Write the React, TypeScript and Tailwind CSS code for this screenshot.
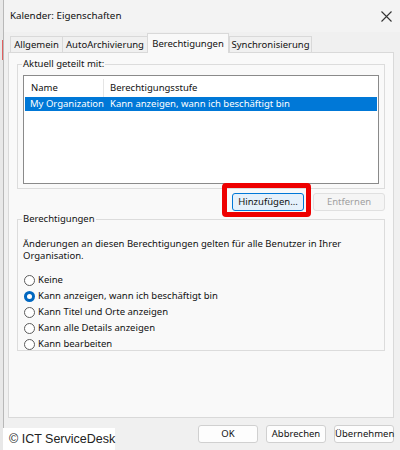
const font = { fontFamily: '"Segoe UI", "Noto Sans", "DejaVu Sans", sans-serif' };

const radios = [
  { label: 'Keine', checked: false },
  { label: 'Kann anzeigen, wann ich beschäftigt bin', checked: true },
  { label: 'Kann Titel und Orte anzeigen', checked: false },
  { label: 'Kann alle Details anzeigen', checked: false },
  { label: 'Kann bearbeiten', checked: false },
];

const tabs = [
  { label: 'Allgemein', w: 'w-[52px]' },
  { label: 'AutoArchivierung', w: 'w-[85px]' },
  { label: 'Berechtigungen', w: 'w-[82px]', active: true },
  { label: 'Synchronisierung', w: 'w-[83px]' },
];

function Radio({ checked }: { checked: boolean }) {
  return checked ? (
    <span className="w-[11px] h-[11px] rounded-full bg-[#0067c0] flex items-center justify-center shrink-0">
      <span className="w-[5px] h-[5px] rounded-full bg-white" />
    </span>
  ) : (
    <span className="w-[11px] h-[11px] rounded-full border border-[#5c5c5c] bg-white shrink-0" />
  );
}

export default function App() {
  return (
    <div
      className="w-[400px] h-[450px] relative overflow-hidden bg-[#d9d9d9] flex text-[9.5px] text-[#111] leading-none"
      style={font}
    >
      {/* window behind the dialog */}
      <div className="w-[3px] flex flex-col bg-[#e8e8e8]">
        <div className="h-[40px]" />
        <div className="h-[20px] border-r border-[#e06060]" />
      </div>

      {/* dialog */}
      <div className="flex-1 flex flex-col bg-[#f0f0f0] border-l border-[#b8b8b8]">
        <div className="h-[32px] flex items-center justify-between pl-[6px] pr-[8px] bg-[#f3f3f3] text-[9.8px]">
          <span>Kalender: Eigenschaften</span>
          <svg width="11" height="11" viewBox="0 0 11 11" className="text-[#333]">
            <path d="M0.5 0.5 L10.5 10.5 M10.5 0.5 L0.5 10.5" stroke="currentColor" strokeWidth="1.1" />
          </svg>
        </div>

        <div className="flex items-end pl-[6px] h-[20px]">
          {tabs.map((t) =>
            t.active ? (
              <div
                key={t.label}
                className={`${t.w} h-[20px] bg-[#f9f9f9] border border-b-0 border-[#d9d9d9] flex items-center justify-center -mb-px relative z-10`}
              >
                {t.label}
              </div>
            ) : (
              <div
                key={t.label}
                className={`${t.w} h-[16px] bg-[#f0f0f0] border border-b-0 border-r-0 last:border-r border-[#d9d9d9] flex items-center justify-center`}
              >
                {t.label}
              </div>
            )
          )}
        </div>

        <div className="ml-[4px] mr-[6px] h-[366px] bg-[#f9f9f9] border border-[#d9d9d9] flex flex-col px-[8px] pt-[11px]">
          {/* group: shared with */}
          <div className="relative border border-[#dcdcdc] h-[125px] px-[5px] pt-[10px]">
            <span className="absolute -top-[6px] left-[4px] px-[1px] bg-[#f9f9f9]">Aktuell geteilt mit:</span>
            <div className="h-[109px] bg-white border border-[#8a8a8a] pt-[3px] px-px">
              <div className="flex h-[18px] items-center">
                <div className="w-[79px] pl-[6px] border-r border-[#e5e5e5] h-full flex items-center">Name</div>
                <div className="pl-[6px]">Berechtigungsstufe</div>
              </div>
              <div className="flex h-[14px] items-center bg-[#0078d7] text-white whitespace-nowrap">
                <div className="w-[79px] pl-[5px]">My Organization</div>
                <div className="pl-[6px]">Kann anzeigen, wann ich beschäftigt bin</div>
              </div>
            </div>
          </div>

          <div className="flex justify-end gap-[9px] mt-[4px] mb-[4px]">
            <div className="relative">
              <div className="absolute -left-[10px] -top-[10px] -right-[7px] -bottom-[6px] border-[5px] border-[#ee0000] rounded-[4px]" />
              <button className="w-[72px] h-[18px] bg-[#e5f1fb] border border-[#0078d7] rounded-[3px]">Hinzufügen...</button>
            </div>
            <button className="w-[72px] h-[18px] bg-[#f5f5f5] border border-[#e0e0e0] rounded-[3px] text-[#a0a0a0]">Entfernen</button>
          </div>

          {/* group: permissions */}
          <div className="relative border border-[#dcdcdc] h-[132px] mt-[4px] px-[5px] pt-[18px]">
            <span className="absolute -top-[6px] left-[4px] px-[1px] bg-[#f9f9f9]">Berechtigungen</span>
            <p className="leading-[12px]">
              Änderungen an diesen Berechtigungen gelten für alle Benutzer in Ihrer Organisation.
            </p>
            <div className="flex flex-col mt-[10px]">
              {radios.map((r) => (
                <div key={r.label} className="h-[16px] flex items-center gap-[3px] pl-[1px]">
                  <Radio checked={r.checked} />
                  <span>{r.label}</span>
                </div>
              ))}
            </div>
          </div>
        </div>

        <div className="flex justify-end gap-[8px] pr-[6px] pt-[7px]">
          {['OK', 'Abbrechen', 'Übernehmen'].map((b) => (
            <button key={b} className="w-[60px] h-[18px] bg-[#fdfdfd] border border-[#d0d0d0] rounded-[3px]">
              {b}
            </button>
          ))}
        </div>
      </div>

      <div
        className="absolute left-[3px] bottom-0 w-[112px] h-[22px] bg-white flex items-center pl-[6px] text-[12.5px] text-[#222] whitespace-nowrap"
        style={{ fontFamily: '"Liberation Sans", Arial, sans-serif' }}
      >
        © ICT ServiceDesk
      </div>
    </div>
  );
}
